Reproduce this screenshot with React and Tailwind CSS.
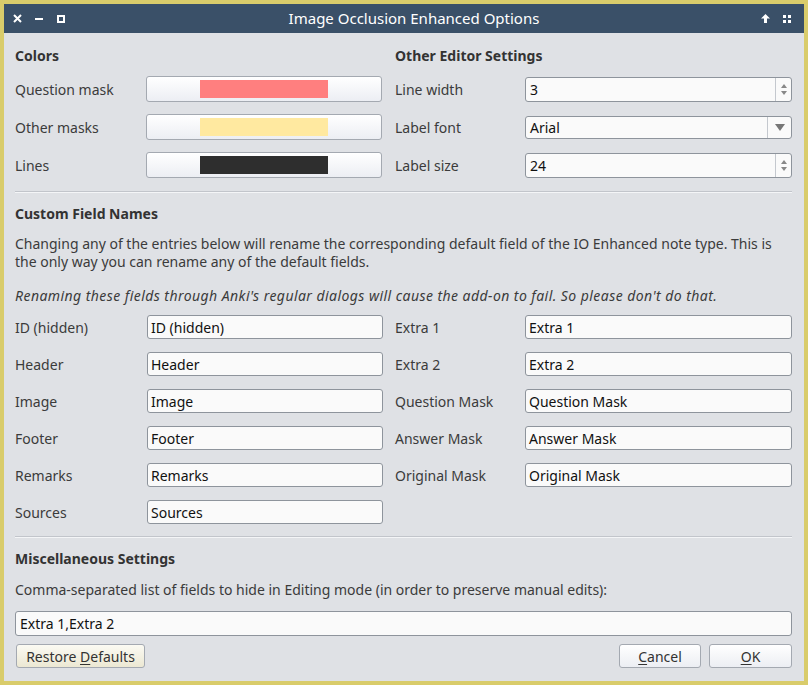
import React from 'react';

const font = { fontFamily: '"Noto Sans", "Open Sans", sans-serif' };

function ColorButton({ color }) {
  return (
    <div className="flex h-[26px] w-[236px] items-center justify-center rounded-[3px] border border-[#a4a9b1] bg-gradient-to-b from-[#ffffff] to-[#eceef3]">
      <div className="h-[18px] w-[128px]" style={{ background: color }} />
    </div>
  );
}

function SpinBox({ value }) {
  return (
    <div className="flex h-[25px] w-[267px] rounded-[3px] border border-[#8e949c] bg-[#fafafa]">
      <div className="flex flex-1 items-center pl-[4px] text-[14px] text-[#111]">{value}</div>
      <div className="flex w-[16px] flex-col items-center justify-center gap-[3px] border-l border-[#c4c8ce]">
        <svg width="6" height="4" viewBox="0 0 6 4"><path d="M3 0L6 4H0z" fill="#888" /></svg>
        <svg width="6" height="4" viewBox="0 0 6 4"><path d="M0 0H6L3 4z" fill="#888" /></svg>
      </div>
    </div>
  );
}

function Combo({ value }) {
  return (
    <div className="flex h-[23px] w-[267px] rounded-[3px] border border-[#8e949c] bg-[#fafafa]">
      <div className="flex flex-1 items-center pl-[4px] text-[14px] text-[#111]">{value}</div>
      <div className="flex w-[24px] items-center justify-center border-l border-[#c4c8ce]">
        <svg width="10" height="7" viewBox="0 0 10 7"><path d="M0 0H10L5 7z" fill="#777" /></svg>
      </div>
    </div>
  );
}

function Field({ value, w }) {
  return (
    <div className={`flex h-[24px] items-center rounded-[3px] border border-[#8e949c] bg-[#fafafa] pl-[3px] text-[14px] text-[#111] ${w}`}>
      {value}
    </div>
  );
}

function Btn({ children, w, beige }) {
  return (
    <div
      className={`flex h-[24px] items-center justify-center rounded-[3px] border border-[#a4a9b1] text-[14px] text-[#333] ${w} ${
        beige ? 'bg-gradient-to-b from-[#fbfaf3] to-[#ece8d3]' : 'bg-gradient-to-b from-[#ffffff] to-[#eceef3]'
      }`}
    >
      {children}
    </div>
  );
}

const leftFields = ['ID (hidden)', 'Header', 'Image', 'Footer', 'Remarks', 'Sources'];
const rightFields = ['Extra 1', 'Extra 2', 'Question Mask', 'Answer Mask', 'Original Mask'];

export default function App() {
  return (
    <div className="h-[685px] w-[808px] bg-[#d9cc6b] px-[4px] pb-[4px] pt-[4px]" style={font}>
      {/* title bar */}
      <div className="flex h-[29px] items-center bg-[#3a5068] text-white">
        <div className="flex w-[64px] items-center">
          <svg className="ml-[9px]" width="9" height="9" viewBox="0 0 9 9">
            <path d="M1 1L8 8M8 1L1 8" stroke="#fff" strokeWidth="2" />
          </svg>
          <svg className="ml-[13px]" width="8" height="2" viewBox="0 0 8 2">
            <rect width="8" height="2" fill="#fff" />
          </svg>
          <svg className="ml-[14px]" width="8" height="8" viewBox="0 0 8 8">
            <rect x="1" y="1" width="6" height="6" fill="none" stroke="#fff" strokeWidth="2" />
          </svg>
        </div>
        <div className="flex-1 text-center text-[15px]">Image Occlusion Enhanced Options</div>
        <div className="flex w-[44px] items-center">
          <svg className="ml-[1px]" width="9" height="9" viewBox="0 0 9 9">
            <path d="M4.5 0L9 4.5H6V9H3V4.5H0z" fill="#fff" />
          </svg>
          <svg className="ml-[13px]" width="8" height="8" viewBox="0 0 8 8">
            <rect x="0" y="0" width="3" height="3" fill="#fff" />
            <rect x="5" y="0" width="3" height="3" fill="#fff" />
            <rect x="0" y="5" width="3" height="3" fill="#fff" />
            <rect x="5" y="5" width="3" height="3" fill="#fff" />
          </svg>
        </div>
      </div>

      {/* body */}
      <div className="h-[648px] bg-[#dfe1e5] pl-[11px] pr-[12px] pt-[13px] text-[14px] text-[#3b3b3b]">
        <div className="flex">
          <div className="w-[380px]">
            <div className="h-[20px] font-bold leading-[20px] text-[#333]">Colors</div>
            <div className="mt-[10px] flex flex-col gap-[12px]">
              {[
                ['Question mask', '#ff7f7f'],
                ['Other masks', '#ffe9a0'],
                ['Lines', '#2e2e2e'],
              ].map(([l, c]) => (
                <div key={l} className="flex items-center">
                  <div className="w-[131px]">{l}</div>
                  <ColorButton color={c} />
                </div>
              ))}
            </div>
          </div>
          <div className="flex-1">
            <div className="h-[20px] font-bold leading-[20px] text-[#333]">Other Editor Settings</div>
            <div className="mt-[11px] flex flex-col gap-[14px]">
              <div className="flex items-center">
                <div className="w-[130px]">Line width</div>
                <SpinBox value="3" />
              </div>
              <div className="flex items-center">
                <div className="w-[130px]">Label font</div>
                <Combo value="Arial" />
              </div>
              <div className="flex items-center">
                <div className="w-[130px]">Label size</div>
                <SpinBox value="24" />
              </div>
            </div>
          </div>
        </div>

        <div className="mt-[13px] h-[1px] bg-[#c2c5cb] shadow-[0_1px_0_#f4f5f7]" />

        <div className="mt-[12px] h-[20px] font-bold leading-[20px] text-[#333]">Custom Field Names</div>
        <div className="mt-[11px] leading-[18px]">
          Changing any of the entries below will rename the corresponding default field of the IO Enhanced note type. This is
          <br />
          the only way you can rename any of the default fields.
        </div>
        <div className="mt-[16px] leading-[18px] italic tracking-[0.44px]">
          Renaming these fields through Anki's regular dialogs will cause the add-on to fail. So please don't do that.
        </div>

        <div className="mt-[10px] flex">
          <div className="flex w-[380px] flex-col gap-[13px]">
            {leftFields.map((f) => (
              <div key={f} className="flex items-center">
                <div className="w-[132px]">{f}</div>
                <Field value={f} w="w-[236px]" />
              </div>
            ))}
          </div>
          <div className="flex flex-1 flex-col gap-[13px]">
            {rightFields.map((f) => (
              <div key={f} className="flex items-center">
                <div className="w-[130px]">{f}</div>
                <Field value={f} w="w-[267px]" />
              </div>
            ))}
          </div>
        </div>

        <div className="mt-[12px] h-[1px] bg-[#c2c5cb] shadow-[0_1px_0_#f4f5f7]" />

        <div className="mt-[12px] h-[20px] font-bold leading-[20px] text-[#333]">Miscellaneous Settings</div>
        <div className="mt-[12px] leading-[18px]">
          Comma-separated list of fields to hide in Editing mode (in order to preserve manual edits):
        </div>
        <div className="mt-[12px] flex h-[25px] items-center rounded-[3px] border border-[#8e949c] bg-[#fafafa] pl-[4px] text-[14px] text-[#111]">
          Extra 1,Extra 2
        </div>
        <div className="mt-[8px] flex items-center">
          <div className="ml-[1px]">
            <Btn w="w-[129px]" beige>
              <span>
                Restore <span className="underline underline-offset-2">D</span>efaults
              </span>
            </Btn>
          </div>
          <div className="flex-1" />
          <Btn w="w-[82px]">
            <span>
              <span className="underline underline-offset-2">C</span>ancel
            </span>
          </Btn>
          <div className="w-[8px]" />
          <Btn w="w-[83px]">
            <span>
              <span className="underline underline-offset-2">O</span>K
            </span>
          </Btn>
        </div>
      </div>
    </div>
  );
}
